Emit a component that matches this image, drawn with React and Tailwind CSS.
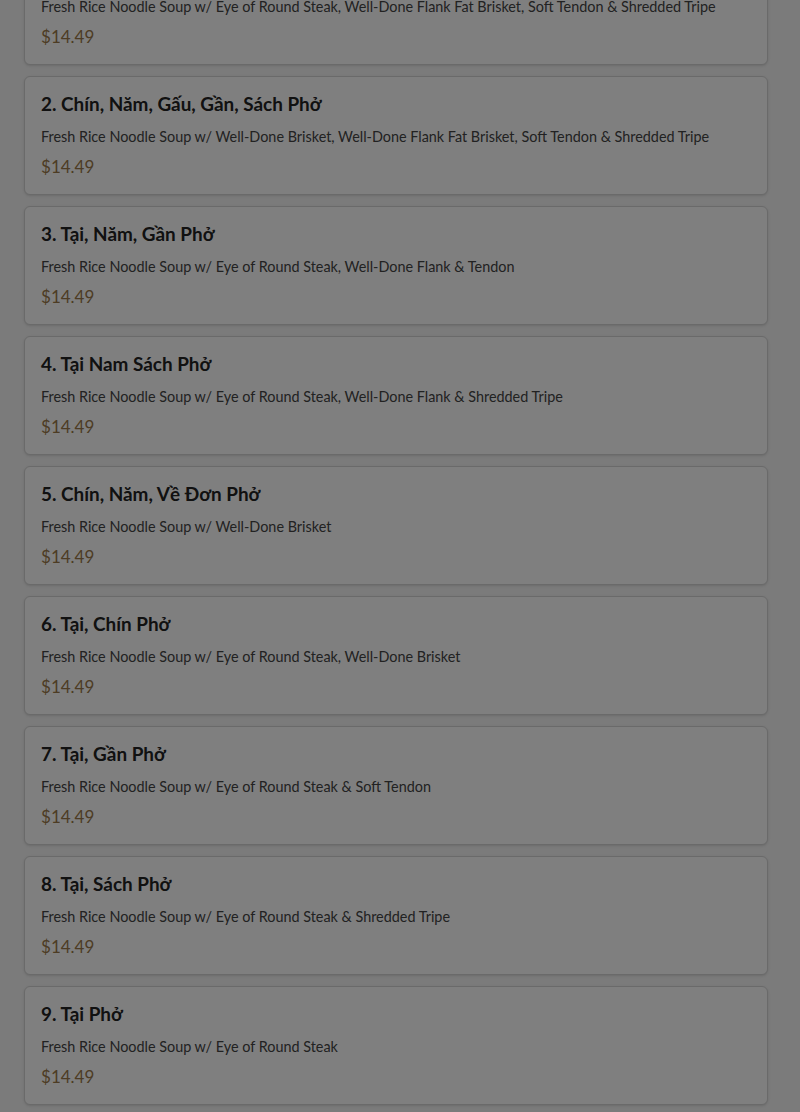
import React from 'react';

const items = [
  { name: '1. Tại, Chín, Nạm, Gân, Sách Phở', desc: 'Fresh Rice Noodle Soup w/ Eye of Round Steak, Well-Done Flank Fat Brisket, Soft Tendon & Shredded Tripe', price: '14.49' },
  { name: '2. Chín, Năm, Gấu, Gần, Sách Phở', desc: 'Fresh Rice Noodle Soup w/ Well-Done Brisket, Well-Done Flank Fat Brisket, Soft Tendon & Shredded Tripe', price: '14.49' },
  { name: '3. Tại, Năm, Gần Phở', desc: 'Fresh Rice Noodle Soup w/ Eye of Round Steak, Well-Done Flank & Tendon', price: '14.49' },
  { name: '4. Tại Nam Sách Phở', desc: 'Fresh Rice Noodle Soup w/ Eye of Round Steak, Well-Done Flank & Shredded Tripe', price: '14.49' },
  { name: '5. Chín, Năm, Về Đơn Phở', desc: 'Fresh Rice Noodle Soup w/ Well-Done Brisket', price: '14.49' },
  { name: '6. Tại, Chín Phở', desc: 'Fresh Rice Noodle Soup w/ Eye of Round Steak, Well-Done Brisket', price: '14.49' },
  { name: '7. Tại, Gần Phở', desc: 'Fresh Rice Noodle Soup w/ Eye of Round Steak & Soft Tendon', price: '14.49' },
  { name: '8. Tại, Sách Phở', desc: 'Fresh Rice Noodle Soup w/ Eye of Round Steak & Shredded Tripe', price: '14.49' },
  { name: '9. Tại Phở', desc: 'Fresh Rice Noodle Soup w/ Eye of Round Steak', price: '14.49' },
];

const MenuItem = ({ item }) => (
  <div className="bg-white border border-[#d4d4d4] rounded-md shadow-sm px-4 pt-4 pb-[15px]">
    <h3 className="text-[18.9px] leading-[22px] font-bold text-[#222]">{item.name}</h3>
    <p className="mt-3 text-[14.4px] leading-5 text-[#444]">{item.desc}</p>
    <div className="mt-2 text-[17px] leading-6 text-[#9a7848]">${item.price}</div>
  </div>
);

export default function App() {
  return (
    <div className="relative h-[1112px] overflow-hidden bg-[#f6f6f6]" style={{ fontFamily: 'Lato, "Noto Sans", sans-serif' }}>
      <div className="pl-6 pr-8 -mt-[54px] flex flex-col gap-[11px]">
        {items.map((item) => (
          <MenuItem key={item.name} item={item} />
        ))}
      </div>
      <div className="fixed inset-0 bg-black/50" />
    </div>
  );
}
